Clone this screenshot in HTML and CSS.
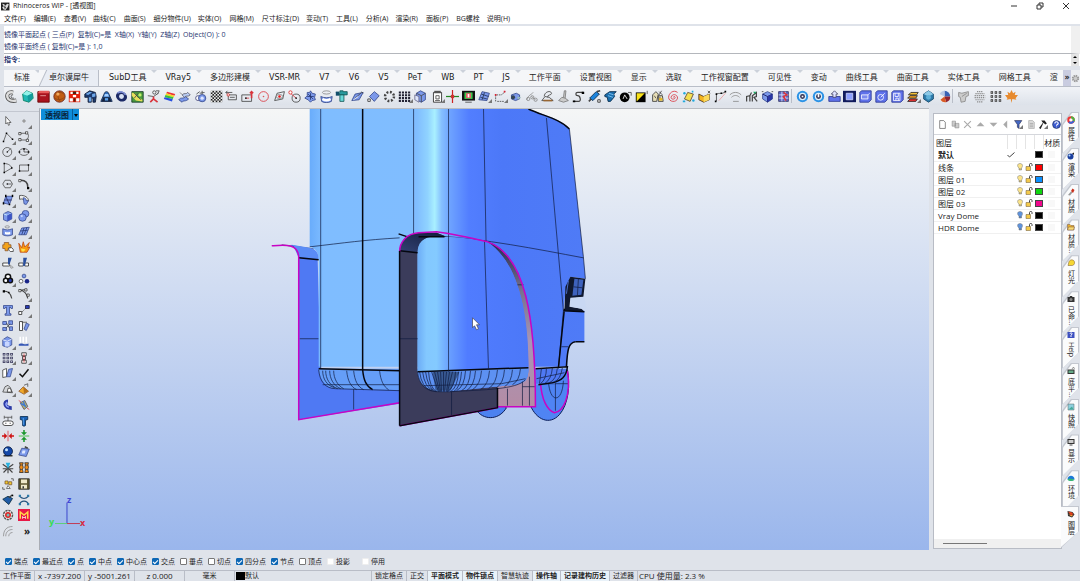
FILE: index.html
```
<!DOCTYPE html>
<html lang="zh-CN">
  <head>
    <meta charset="UTF-8" />
    <meta name="viewport" content="width=device-width, initial-scale=1" />
    <title>Rhinoceros WIP - [透视图]</title>
    <link rel="stylesheet" href="styles.css">
  </head>
  <body>
    <header class="titlebar">
      <svg class="app-icon" viewBox="0 0 16 16"><path d="M0 1h15v14H0z" fill="#222"/><path d="M2 3l4 1 1 3 4-4 3 1-2 5-4 5-4-1-2-4 3-1z" fill="#ddd"/><path d="M5 7l4 2-2 4z" fill="#333"/></svg>
      <h1>Rhinoceros WIP - [透视图]</h1>
      <div class="window-buttons">
        <button aria-label="最小化"><svg viewBox="0 0 10 10"><path d="M2 5h6"/></svg></button>
        <button aria-label="还原"><svg viewBox="0 0 10 10"><path d="M2 4h4v4H2zM4 4V2h4v4H6"/></svg></button>
        <button aria-label="关闭"><svg viewBox="0 0 10 10"><path d="M2 2l6 6M8 2L2 8"/></svg></button>
      </div>
    </header>

    <nav class="menubar">
      <button>文件(F)</button>
      <button>编辑(E)</button>
      <button>查看(V)</button>
      <button>曲线(C)</button>
      <button>曲面(S)</button>
      <button>细分物件(U)</button>
      <button>实体(O)</button>
      <button>网格(M)</button>
      <button>尺寸标注(D)</button>
      <button>变动(T)</button>
      <button>工具(L)</button>
      <button>分析(A)</button>
      <button>渲染(R)</button>
      <button>面板(P)</button>
      <button>BG螺栓</button>
      <button>说明(H)</button>
    </nav>

    <section class="command">
      <div class="history">
        <p>镜像平面起点 ( 三点(P)&nbsp; 复制(C)=是&nbsp; X轴(X)&nbsp; Y轴(Y)&nbsp; Z轴(Z)&nbsp; Object(O) ): 0</p>
        <p>镜像平面终点 ( 复制(C)=是 ): 1,0</p>
      </div>
      <div class="prompt">
        <label for="cmd">指令:</label>
        <input id="cmd" type="text">
        <div class="spin">
          <button aria-label="上"><svg viewBox="0 0 8 6"><path d="M2 4l2-2 2 2z"/></svg></button>
          <button aria-label="下"><svg viewBox="0 0 8 6"><path d="M2 2l2 2 2-2z"/></svg></button>
        </div>
      </div>
    </section>

    <nav class="tabs">
      <div class="tab-list">
        <button>标准</button>
        <button class="active">卓尔谟犀牛</button>
        <button>SubD工具</button>
        <button>VRay5</button>
        <button>多边形建模</button>
        <button>VSR-MR</button>
        <button>V7</button>
        <button>V6</button>
        <button>V5</button>
        <button>PeT</button>
        <button>WB</button>
        <button>PT</button>
        <button>JS</button>
        <button>工作平面</button>
        <button>设置视图</button>
        <button>显示</button>
        <button>选取</button>
        <button>工作视窗配置</button>
        <button>可见性</button>
        <button>变动</button>
        <button>曲线工具</button>
        <button>曲面工具</button>
        <button>实体工具</button>
        <button>网格工具</button>
        <button>渲</button>
      </div>
      <div class="tabs-more">
        <button aria-label="更多">»</button>
        <button aria-label="选项"><svg viewBox="0 0 16 16"><circle cx="8" cy="8" r="5" fill="none" stroke="#999" stroke-width="3" stroke-dasharray="2.5 1.4"/><circle cx="8" cy="8" r="4" fill="#ccc" stroke="#888"/></svg></button>
      </div>
    </nav>

    <div class="toolbar">
      <button aria-label="圆管"><svg viewBox="0 0 16 16"><path d="M10 3C4 2 2 5 3 9s6 5 11 4" fill="none" stroke="#555" stroke-width="5"/><path d="M10 3C4 2 2 5 3 9s6 5 11 4" fill="none" stroke="#ddd" stroke-width="3"/><path d="M10 6c-4 0-3 5 1 4" class="k"/></svg></button>
      <button aria-label="宝石"><svg viewBox="0 0 16 16"><path d="M2 5l5-4 7 3 1 6-5 5-7-2z" fill="#20b8b4" stroke="#075"/><path d="M2 5l6 2 6-3-7-3z" fill="#92f1e8"/><path d="M8 7l1 8 5-5V4z" fill="#129a9c"/></svg></button>
      <button aria-label="红色方块"><svg viewBox="0 0 16 16"><path d="M1 2h14v13H1z" fill="#a9121d" stroke="#600"/><path d="M1 4l2-3h12v3z" fill="#e65a5a"/><path d="M4 7h7" stroke="#eaa" stroke-width="1"/></svg></button>
      <button aria-label="材质球"><svg viewBox="0 0 16 16"><circle cx="8" cy="8" r="7" fill="#c05c14" stroke="#622"/><path d="M2 6c4-4 8-4 11-1M2 10c4 3 9 2 12-1M8 2c-3 4-2 9 1 12" fill="none" stroke="#8d4212"/><circle cx="6" cy="5" r="2" fill="#f3a95d"/></svg></button>
      <button aria-label="贴图"><svg viewBox="0 0 16 16"><path d="M1 1h14v14H1z" fill="#e3200b"/><path d="M3 2h3v3H3zM10 2h3v3h-3zM6 6h4v3H6zM2 10h4v4H2zM10 10h4v4h-4z" fill="#fff"/><path d="M6 2h4v3H6zM7 10h2v4H7z" fill="#421"/></svg></button>
      <button aria-label="装配"><svg viewBox="0 0 16 16"><path d="M1 5l6-4 7 2 1 5-1 7h-3v-5l-2 0v5H5V9H1z" class="n"/><path d="M2 5l5-3 3 1-5 3zM10 5l4-1v4l-4 1zM6 9h3v5H6z" fill="#6fa8ea"/></svg></button>
      <button aria-label="铃形"><svg viewBox="0 0 16 16"><path d="M1 14L5 5c1-4 5-4 6 0l4 9z" fill="#2f6dbd" stroke="#124"/><path d="M6 5h4l1 3H5z" fill="#a5d0ff"/><path d="M4 9h8l2 5H2z" fill="#15223d"/><path d="M6 10h4v3H6z" fill="#5ca1ec"/></svg></button>
      <button aria-label="圆环"><svg viewBox="0 0 16 16"><ellipse cx="8" cy="8" rx="7" ry="6" fill="#1c2a66" transform="rotate(30 8 8)"/><ellipse cx="8" cy="8" rx="3" ry="3" fill="#d9e2f5"/><path d="M3 4c3-3 8-2 10 2" fill="none" stroke="#8292d8" stroke-width="2"/></svg></button>
      <button aria-label="环境"><svg viewBox="0 0 16 16"><path d="M1 2h14v13H1z" fill="#4a9a3f" stroke="#132"/><path d="M1 3l5 2 2 4 6 3v2l-8-1-5-6z" fill="#e8e05a"/><path d="M4 4l8 8M9 4l-5 6" class="k"/><circle cx="11" cy="6" r="2" fill="#bff06a"/></svg></button>
      <button aria-label="骨架"><svg viewBox="0 0 16 16"><circle cx="9" cy="3" r="2" class="k"/><path d="M1 7l7 1 6-4M11 1h4l-2 4" class="k"/><path d="M8 8v3l-4 4M8 11l5 4" class="r" stroke-width="2"/></svg></button>
      <button aria-label="曲率"><svg viewBox="0 0 16 16"><path d="M5 2l10 3-1 2L4 4z" fill="#e33"/><path d="M4 4l10 3-1 2L3 6z" fill="#f5d620"/><path d="M3 6l10 3-1 2L2 9z" fill="#36c23c"/><path d="M2 9l10 2-1 3L1 11z" fill="#2a50e0"/></svg></button>
      <button aria-label="曲面片"><svg viewBox="0 0 16 16"><path d="M1 12c3-4 4 0 8-4l4 3c-4 4-6 1-8 4z" class="b"/><path d="M5 6c3-3 5 0 7-3l3 3c-3 3-5 0-7 3z" fill="#bcd0f8" stroke="#556"/><path d="M2 3l4 3" class="g"/></svg></button>
      <button aria-label="组合"><svg viewBox="0 0 16 16"><circle cx="5" cy="10" r="3" fill="#fff" stroke="#447"/><circle cx="10" cy="10" r="4.500" class="b"/><circle cx="10" cy="10" r="2" fill="#dfe7ff"/><path d="M3 5l4-3M10 1v4M7 4l6-1" class="k"/></svg></button>
      <button aria-label="棋盘格"><svg viewBox="0 0 16 16"><path d="M1 1h14v14H1z" fill="#222"/><path d="M1 2h14M1 6h14M1 10h14M1 14h14" stroke="#eee" stroke-width="2" stroke-dasharray="2 2"/><path d="M3 4h12M3 8h12M3 12h12" stroke="#eee" stroke-width="2" stroke-dasharray="2 2"/></svg></button>
      <button aria-label="拉伸矩形"><svg viewBox="0 0 16 16"><path d="M4 6h10v6H4zM1 3h8M1 3l2-2M1 3l2 2M6 9h6" class="k"/><circle cx="4" cy="6" r="1.500" fill="#fff" stroke="#c22"/></svg></button>
      <button aria-label="推移"><svg viewBox="0 0 16 16"><path d="M1 6h12v8H1z" class="k"/><path d="M13 10V2M11 4l2-2 2 2" class="r" stroke-width="2"/><path d="M6 10h4" class="r"/><circle cx="6" cy="10" r="1"/></svg></button>
      <button aria-label="圆"><svg viewBox="0 0 16 16"><circle cx="8" cy="8" r="6" class="r"/><circle cx="8" cy="8" r="1" fill="#d55"/></svg></button>
      <button aria-label="菱形"><svg viewBox="0 0 16 16"><path d="M2 13L5 4l9-2-2 9z" class="k"/><ellipse cx="8" cy="8" rx="4" ry="2.500" class="g"/><circle cx="8" cy="8" r="1.500" fill="#e11"/></svg></button>
      <button aria-label="切点圆"><svg viewBox="0 0 16 16"><circle cx="10" cy="10" r="5" class="k"/><path d="M2 3l8 7" class="r"/><circle cx="3" cy="3" r="2" fill="#fff" stroke="#d22"/><circle cx="10" cy="10" r="1"/></svg></button>
      <button aria-label="变形"><svg viewBox="0 0 16 16"><path d="M8 1l2 3 4 1-1 4 1 3-4 1-2 2-3-3-4-2 3-3 0-4 3 0z" class="b"/><path d="M8 4v8M4 8h8M5 5l6 6" stroke="#24356f"/></svg></button>
      <button aria-label="放样"><svg viewBox="0 0 16 16"><ellipse cx="8" cy="3" rx="5" ry="2" class="g"/><path d="M1 8c4 2 10 2 14 0l-1 6c-4 2-9 2-12 0z" class="b"/><path d="M3 11c3 2 7 2 10 0" stroke="#fff" stroke-width="3" fill="none"/></svg></button>
      <button aria-label="夹具"><svg viewBox="0 0 16 16"><path d="M1 3h4v3h10V2h-5V1H6v2" fill="#29999d" stroke="#155"/><path d="M6 6h5v8H6z" fill="#6adada" stroke="#155"/><path d="M1 2h4v5H1z" fill="#134e6b"/></svg></button>
      <button aria-label="编辑面"><svg viewBox="0 0 16 16"><path d="M1 13L5 5l10-2-5 9z" class="b"/><path d="M4 11l9-8M13 2l2 2" class="k"/><path d="M3 12l6-4" stroke="#fff"/></svg></button>
      <button aria-label="平面"><svg viewBox="0 0 16 16"><path d="M3 8l6-6 6 5-6 7z" class="b"/><path d="M1 11h3v3H1z" fill="#fff" stroke="#333"/></svg></button>
      <button aria-label="环形阵列"><svg viewBox="0 0 16 16"><circle cx="8" cy="8" r="5.500" fill="none" stroke="#444" stroke-width="3" stroke-dasharray="2.300 2"/></svg></button>
      <button class="fly" aria-label="矩形阵列"><svg viewBox="0 0 16 16"><path d="M1 3h14M1 6.500h14M1 10h14M1 13.500h14" stroke="#223" stroke-width="2.500" stroke-dasharray="2.600 1.200"/></svg></button>
      <button aria-label="方块"><svg viewBox="0 0 16 16"><path d="M3 4l5-3 6 3v8l-5 3-6-3z" class="b"/><path d="M3 4l6 3 5-3M9 7v8" class="k"/><path d="M1 6v6l5 3V8z" fill="#dce4fa" stroke="#668"/></svg></button>
      <i class="sep thin"></i>
      <button class="fly" aria-label="剪贴板"><svg viewBox="0 0 16 16"><path d="M3 3h10v12H3z" fill="#fff" stroke="#222"/><path d="M4 1h8v3H4z" fill="#555"/><path d="M6 7h4v4H6zM5 13h6" class="k"/></svg></button>
      <button aria-label="操作轴"><svg viewBox="0 0 16 16"><path d="M8 0v16" stroke="#c22" stroke-width="1.500"/><path d="M0 8h16" stroke="#282" stroke-width="1.500"/><path d="M6 6h4v4H6z" fill="#c33"/></svg></button>
      <button aria-label="渲染窗口"><svg viewBox="0 0 16 16"><path d="M0 1h16v12H0z" fill="#111"/><path d="M3 3h10v8H3z" fill="#3cc84f"/><path d="M5 4h6v6H5z" fill="#ef5a6a"/><path d="M7 5h2v4H7z" fill="#fff"/><path d="M4 15h8" class="k"/></svg></button>
      <button class="fly" aria-label="网格面"><svg viewBox="0 0 16 16"><path d="M1 12L5 2l9 2-3 9z" class="b"/><path d="M4 5l9 3M3 9l8 2M8 3l-3 9" stroke="#235"/></svg></button>
      <button class="fly" aria-label="控制点"><svg viewBox="0 0 16 16"><path d="M2 14V6h7M9 6l5-4M4 14h9" class="k" stroke-dasharray="2 1"/><path d="M12 1h2v2h-2zM1 5h2v2H1z" fill="#d23"/></svg></button>
      <button aria-label="圆柱"><svg viewBox="0 0 16 16"><path d="M3 6l6-2 4 2v5l-5 2-5-2z" class="b"/><circle cx="5" cy="9" r="2.500" fill="#345"/><path d="M10 8l5 1-4 3z" fill="#9bb"/></svg></button>
      <button aria-label="节点"><svg viewBox="0 0 16 16"><path d="M2 12c3-7 6-6 8-9M8 8l5 4" class="g"/><circle cx="4" cy="11" r="2" class="g"/><circle cx="9" cy="9" r="2" class="g"/><circle cx="13" cy="12" r="2" class="g"/></svg></button>
      <button aria-label="地形"><svg viewBox="0 0 16 16"><path d="M1 13l4-5 5 1 5 4zM4 8c0-6 8-8 9-4 0 3-5 1-5 5" class="k"/><path d="M3 13h11" stroke="#963" stroke-width="2"/></svg></button>
      <button aria-label="笔刷"><svg viewBox="0 0 16 16"><path d="M2 13l4-4 4 1 4 3-6 2zM8 9l1-8h2l-1 9" fill="#ccc" stroke="#777"/></svg></button>
      <button aria-label="连接线"><svg viewBox="0 0 16 16"><path d="M14 3H7c-3 0-3 4 0 4s5 7 1 7H2" class="k" stroke-width="1.500"/><path d="M12 2h3v3h-3zM1 13h3v2H1z"/></svg></button>
      <button aria-label="注入"><svg viewBox="0 0 16 16"><path d="M2 10l8-8 4 3-8 8z" fill="#1c83dc" stroke="#024"/><path d="M1 14l3-3M11 2l4-1" class="k" stroke-width="2"/><path d="M12 12h3v3h-3z" fill="#fff" stroke="#222"/></svg></button>
      <button aria-label="抓取"><svg viewBox="0 0 16 16"><path d="M1 6l6-4h8l-3 3 1 3-5 6H5L4 9 1 8z" fill="#1b6fae" stroke="#024"/><path d="M6 4l6 2M5 7l6 2" stroke="#8cf"/></svg></button>
      <button aria-label="黑球"><svg viewBox="0 0 16 16"><circle cx="7" cy="9" r="6"/><path d="M5 11l2-5 3 5" stroke="#fff" fill="none"/><path d="M11 3h4v4" class="k"/></svg></button>
      <button aria-label="明暗"><svg viewBox="0 0 16 16"><path d="M1 3h12v12H1z"/><path d="M2 4h10L2 14z" fill="#f8e11b"/><path d="M15 1v4" class="k"/></svg></button>
      <button aria-label="油桶"><svg viewBox="0 0 16 16"><path d="M2 6l4-4 3 3-2 9H2zM9 7h5l1 7H9z" fill="#e8dfb8" stroke="#333"/><path d="M4 7l2 3M11 8v4M10 2l4 4M13 1l-3 5" class="k"/><path d="M10 10h4v3h-4z" fill="#e7b820"/></svg></button>
      <button aria-label="螺旋"><svg viewBox="0 0 16 16"><path d="M13 3C8-1 2 4 2 9c0 6 10 7 11 1 0-5-7-6-8-1 0 3 5 3 5 0-1-2-2-1-2 0" class="r"/></svg></button>
      <button aria-label="黄面"><svg viewBox="0 0 16 16"><path d="M3 11l4-8 7 2-4 9z" fill="#f5df50" stroke="#543"/><circle cx="3" cy="4" r="1.500" fill="#2ad"/><circle cx="14" cy="13" r="1.500" fill="#2ad"/><path d="M1 14h3M13 1v2" stroke="#2ad" stroke-width="2"/></svg></button>
      <button aria-label="黄盒"><svg viewBox="0 0 16 16"><path d="M1 5l6 3 7-3v7l-7 3-6-3z" fill="#f3b320" stroke="#432"/><path d="M7 8l7-3v7l-7 3z" fill="#fbd95a"/><path d="M12 1l3 3M15 1l-3 3" class="k"/></svg></button>
      <button aria-label="样条"><svg viewBox="0 0 16 16"><path d="M3 14V5c4-2 6 1 11-3" class="k"/><path d="M6 13l8-9" stroke="#e99"/><path d="M2 4h2v2H2zM8 3h2v2H8zM13 1h2v2h-2zM1 13h2v2H1z"/></svg></button>
      <button aria-label="波形"><svg viewBox="0 0 16 16"><path d="M1 6c4-4 10-4 14 0M3 9c3-3 7-3 10 0M5 14h7" class="g"/></svg></button>
      <button aria-label="舞者"><svg viewBox="0 0 16 16"><path d="M2 14V8l4-1v7M6 7l2-4" class="k" stroke-width="1.500"/><path d="M9 14V7l5-4v5l-3 1 4 5" class="k" stroke-width="1.500"/><path d="M10 2l4 0-2 3z" fill="#2a6"/></svg></button>
      <button aria-label="立方体"><svg viewBox="0 0 16 16"><path d="M2 5l6-3 6 3v6l-6 4-6-4z" class="b"/><path d="M2 5l6 3 6-3M8 8v7" stroke="#115" fill="none"/><path d="M8 8l6-3v6l-6 4z" fill="#2b37a5"/><path d="M13 2h2M1 2h2" class="k"/></svg></button>
      <button aria-label="拆分格"><svg viewBox="0 0 16 16"><path d="M2 2h12v12H2z" fill="#5c6cc8" stroke="#336"/><path d="M2 6h12M2 10h12M6 2v12M10 2v12" stroke="#e6e9fb"/><path d="M8 3l4 3-4 2 3 5" class="r" stroke-width="2"/></svg></button>
      <i class="sep"></i>
      <button aria-label="设置一"><svg viewBox="0 0 16 16"><circle cx="8" cy="8" r="7" fill="#2c93e6"/><circle cx="8" cy="8" r="4.500" fill="#dff0fc"/><circle cx="8" cy="8" r="3" fill="#335"/><path d="M7 7h2v2H7z" fill="#fff"/></svg></button>
      <button aria-label="设置二"><svg viewBox="0 0 16 16"><circle cx="8" cy="8" r="7" fill="#2c93e6"/><circle cx="8" cy="8" r="4.500" fill="#dff0fc"/><circle cx="8" cy="8" r="3" fill="#335"/><path d="M7 5h2v4H7z" fill="#fff"/></svg></button>
      <button aria-label="导出"><svg viewBox="0 0 16 16"><path d="M1 8h14v6H1z" class="v"/><path d="M8 1l4 4h-2v4H6V5H4z" fill="#dfe3ff" stroke="#446"/></svg></button>
      <button aria-label="外框"><svg viewBox="0 0 16 16"><path d="M0 1h16v14H0z" fill="#101a5c"/><path d="M4 4h8v8H4z" fill="#8ea0ff" stroke="#cdd5ff"/></svg></button>
      <button aria-label="矩形块"><svg viewBox="0 0 16 16"><path d="M1 3l2-2h12v11l-3 3H1z" class="v"/><path d="M3 6h8v5H3z" fill="#7c8bf0" stroke="#fff"/><path d="M13 4l-2 2" stroke="#fff"/></svg></button>
      <button aria-label="圆形块"><svg viewBox="0 0 16 16"><path d="M1 3l2-2h12v11l-3 3H1z" class="v"/><circle cx="7" cy="9" r="3.500" fill="none" stroke="#fff"/><path d="M7 9l5-5" stroke="#fff"/></svg></button>
      <button aria-label="保存块"><svg viewBox="0 0 16 16"><path d="M1 3l2-2h12v11l-3 3H1z" class="v"/><path d="M3 4h8v9H3zM5 4v4h4V4M6 13v-3h3v3" fill="none" stroke="#fff"/></svg></button>
      <button class="fly" aria-label="图层堆叠"><svg viewBox="0 0 16 16"><path d="M2 14l3-3h9l-2 3z" fill="#e33" stroke="#222"/><path d="M2 10l3-3h9l-2 3z" fill="#f2a222" stroke="#222"/><path d="M3 6l3-3h9l-2 3z" fill="#f5c23a" stroke="#222"/></svg></button>
      <button aria-label="六角"><svg viewBox="0 0 16 16"><path d="M8 1l6 4v6l-6 4-6-4V5z" fill="#2f7dad" stroke="#146"/><path d="M2 5l6 3 6-3-6-4z" fill="#8cc8e6"/><circle cx="8" cy="9" r="3" fill="#5fb0d8"/></svg></button>
      <button aria-label="色轮"><svg viewBox="0 0 16 16"><circle cx="8" cy="8" r="7" fill="#eee"/><path d="M8 8V1a7 7 0 0 1 7 7z" fill="#3a63b5"/><path d="M8 8h7a7 7 0 0 1-5 7z" fill="#912432"/><path d="M8 8l2 7a7 7 0 0 1-7-3z" fill="#d95a24"/><path d="M8 8L2 5a7 7 0 0 1 6-4z" fill="#b8c9e6"/></svg></button>
      <i class="sep"></i>
      <button aria-label="卷曲"><svg viewBox="0 0 16 16"><path d="M2 3l4 1 8-2v5l-3 1-1 6-5 1-1-6-2-1z" fill="#ccc" stroke="#888"/><path d="M6 8l6-4" class="g"/></svg></button>
      <button aria-label="点云球"><svg viewBox="0 0 16 16"><path d="M5 2h7M3 4.500h11M2 7h13M2 9.500h13M3 12h11M5 14.500h7" class="g" stroke-width="1.500" stroke-dasharray="1.500 1"/></svg></button>
      <button aria-label="点阵"><svg viewBox="0 0 16 16"><path d="M2 3h13M2 8h13M2 13h13" stroke="#333" stroke-width="3" stroke-dasharray="3 2"/><path d="M2 3h13M2 8h13M2 13h13" stroke="#fff" stroke-width="1" stroke-dasharray="1 4" stroke-dashoffset="-1"/></svg></button>
      <button aria-label="枫叶"><svg viewBox="0 0 16 16"><path d="M8 0l2 4 3-2-1 4h4l-3 4 1 2-5-1-1 5-1-5-5 1 1-2-3-4h4L3 2l3 2z" fill="#e78a2e"/></svg></button>
    </div>

    <main>
      <div class="palette">
        <button aria-label="选取"><svg viewBox="0 0 16 16"><path d="M5 2v10l2-2 2 4 1-1-1-3h3z" fill="#fff" stroke="#444"/></svg></button>
        <button class="fly" aria-label="点"><svg viewBox="0 0 16 16"><circle cx="8" cy="8" r="1.500" fill="#fff" stroke="#555"/></svg></button>
        <button class="fly" aria-label="多重直线"><svg viewBox="0 0 16 16"><path d="M2 14L6 3l8 8" class="k"/><path d="M1 13h2v2H1zM5 2h2v2H5zM13 10h2v2h-2z"/></svg></button>
        <button class="fly" aria-label="控制点曲线"><svg viewBox="0 0 16 16"><path d="M3 3h8c5 0 3 9-1 9H3" class="k"/><path d="M1 2h3v3H1zM10 1h3v3h-3zM1 10h3v3H1zM11 11h3v3h-3z" fill="#fff" stroke="#333"/></svg></button>
        <button class="fly" aria-label="圆"><svg viewBox="0 0 16 16"><circle cx="7" cy="8" r="6" class="k"/><path d="M7 8l5-5" class="k"/><circle cx="7" cy="8" r="1"/></svg></button>
        <button class="fly" aria-label="椭圆"><svg viewBox="0 0 16 16"><ellipse cx="8" cy="8" rx="6.500" ry="4.500" class="k"/><path d="M8 4v4h6" class="k"/><path d="M7 3h2v2H7zM1 7h2v2H1zM13 7h2v2h-2z"/></svg></button>
        <button class="fly" aria-label="圆弧"><svg viewBox="0 0 16 16"><path d="M3 2c6 0 10 4 10 6L3 14z" class="k"/><path d="M2 1h2v2H2zM2 13h2v2H2zM12 7h2v2h-2z"/></svg></button>
        <button class="fly" aria-label="矩形"><svg viewBox="0 0 16 16"><path d="M2 4h12v8H2z" class="k"/><path d="M1 11h2v2H1zM13 3h2v2h-2z"/></svg></button>
        <button class="fly" aria-label="多边形"><svg viewBox="0 0 16 16"><path d="M4 3h7l3 5-3 5H4L1 8z" class="k"/><path d="M7 8h6" class="k"/><circle cx="7" cy="8" r="1"/></svg></button>
        <button class="fly" aria-label="圆角"><svg viewBox="0 0 16 16"><path d="M4 3c7 0 9 5 9 9" class="k" stroke-width="2"/><path d="M1 2h3v3H1z" fill="#fff" stroke="#333"/><path d="M12 12h3v3h-3z"/></svg></button>
        <button class="fly" aria-label="点建面"><svg viewBox="0 0 16 16"><path d="M2 12L5 3h9l-4 11z" class="b"/><path d="M5 3l5 11M3 8h10" stroke="#225"/><path d="M1 11h2v3H1zM4 1h2v3H4zM13 1h2v3h-2zM9 13h2v2H9z"/></svg></button>
        <button class="fly" aria-label="旋转面"><svg viewBox="0 0 16 16"><path d="M2 2c7-1 12 3 12 7l-5 1c0-3-3-4-7-3z" fill="#eee" stroke="#333"/><path d="M7 5c3 0 4 2 4 4l3 0-3 5-3-1z" class="b"/></svg></button>
        <button class="fly" aria-label="立方体"><svg viewBox="0 0 16 16"><path d="M2 5l6-3 5 2v8l-6 3-5-2z" class="b"/><path d="M2 5l5 2 6-3" fill="none" stroke="#dff"/><path d="M7 7l6-3v8l-6 3z" fill="#3d55c4"/></svg></button>
        <button class="fly" aria-label="球体"><svg viewBox="0 0 16 16"><circle cx="10" cy="5" r="4.500" class="b"/><circle cx="6" cy="10" r="5" class="b"/><circle cx="5" cy="8" r="1.500" fill="#c5d6ff"/></svg></button>
        <button class="fly" aria-label="曲面编辑"><svg viewBox="0 0 16 16"><ellipse cx="7" cy="2.500" rx="3" ry="1.500" class="g"/><path d="M1 5c4 2 8 2 13 0v8c-4 2-9 2-13 0z" class="b"/><path d="M4 9c2 1 5 1 7 0v3c-2 1-5 1-7 0z" fill="#fff"/></svg></button>
        <button class="fly" aria-label="网格"><svg viewBox="0 0 16 16"><path d="M1 13L5 4l10-1-4 10z" class="b"/><path d="M3 8l10-1M8 4l-3 9M12 3l-4 10" stroke="#24356f"/></svg></button>
        <button aria-label="布尔运算"><svg viewBox="0 0 16 16"><path d="M3 2h6v3h3v5H8v3H4v-3H1V5h2z" fill="#f2a21a" stroke="#853"/><path d="M9 9h4l2 2v3h-4l-2-2z" fill="#fff" stroke="#333"/></svg></button>
        <button aria-label="炸开"><svg viewBox="0 0 16 16"><path d="M1 3l4 6 2-8 2 7 6-6-2 7 3-1-4 7H3z" fill="#f79a10" stroke="#b41"/><path d="M4 10l6 1-2 3H5z" fill="#fde04a"/></svg></button>
        <button aria-label="修剪"><svg viewBox="0 0 16 16"><path d="M1 8h9v4H1z" fill="#fff" stroke="#222"/><path d="M8 1h5l-3 9H8z" fill="#2a4f9e"/><path d="M10 10l5 4-3 1z" class="g"/></svg></button>
        <button aria-label="分割"><svg viewBox="0 0 16 16"><path d="M1 8h6v4H1zM9 8h5v4H9z" fill="#fff" stroke="#222"/><path d="M7 1h5l-3 11H7z" fill="#2a4f9e"/></svg></button>
        <button class="fly" aria-label="群组"><svg viewBox="0 0 16 16"><circle cx="8" cy="5" r="3.500" fill="#fff" stroke="#111" stroke-width="2"/><circle cx="5" cy="10" r="3" fill="#fff" stroke="#111" stroke-width="2"/><circle cx="11" cy="10" r="3" fill="#2a3eb8" stroke="#111" stroke-width="2"/></svg></button>
        <button aria-label="解散群组"><svg viewBox="0 0 16 16"><circle cx="8" cy="4" r="2.500" class="b"/><circle cx="4" cy="11" r="2.500" fill="#fff" stroke="#444"/><circle cx="12" cy="11" r="3" fill="#1a2488"/></svg></button>
        <button aria-label="曲线延伸"><svg viewBox="0 0 16 16"><path d="M2 4c6 0 10 4 11 10" class="k" stroke-width="1.500"/><path d="M1 3h3v3H1zM8 5h2v2H8z"/></svg></button>
        <button class="fly" aria-label="编辑点"><svg viewBox="0 0 16 16"><path d="M3 3c6 1 9 5 10 11M3 3l8-1" class="k" stroke-width="1.500"/><path d="M1 2h3v3H1zM9 1h3v3H9zM12 8h3v3h-3z" fill="#fff" stroke="#333"/></svg></button>
        <button aria-label="文字"><svg viewBox="0 0 16 16"><path d="M2 2h12v4h-2l-1-2h-1v9h2v2H4v-2h2V4H5L4 6H2z" class="b"/></svg></button>
        <button class="fly" aria-label="移动"><svg viewBox="0 0 16 16"><path d="M5 11l6-6" class="k" stroke-dasharray="2 1"/><path d="M1 10h4v4H1z" fill="#fff" stroke="#222"/><path d="M10 2h5v4h-5z" fill="#2a3eb8" stroke="#113"/></svg></button>
        <button aria-label="对齐"><svg viewBox="0 0 16 16"><path d="M1 2h5v4H1zM9 1h5v5H9zM1 10h5v4H1zM10 9h4v5h-4z" class="b"/><path d="M6 4l4 7M5 11l6-6" class="k"/></svg></button>
        <button aria-label="定位"><svg viewBox="0 0 16 16"><path d="M2 2v12h4V2z" fill="#fff" stroke="#222"/><path d="M8 12l3-8 4 2-4 8z" class="b"/><path d="M5 3h7" class="k"/></svg></button>
        <button class="fly" aria-label="实体工具"><svg viewBox="0 0 16 16"><path d="M1 5l6-4 6 3v8l-6 3-6-2z" class="b"/><path d="M4 8h6v6H4z" fill="#c8d6ff"/><path d="M1 5l6 2 6-3" fill="none" stroke="#fff"/></svg></button>
        <button class="fly" aria-label="投影"><svg viewBox="0 0 16 16"><path d="M3 1v8M7 1v8M11 1v8" stroke="#fff" stroke-width="2"/><path d="M1 11c4-3 8 2 13-1v3H1z" fill="#3557b5"/></svg></button>
        <button class="fly" aria-label="阵列"><svg viewBox="0 0 16 16"><path d="M1 3h14M1 8h14M1 13h14" stroke="#335" stroke-width="3.500" stroke-dasharray="3.500 1.500"/><path d="M2 3h14M2 8h14M2 13h14" stroke="#dde" stroke-width="1.500" stroke-dasharray="1.500 3.500"/></svg></button>
        <button class="fly" aria-label="变形控制"><svg viewBox="0 0 16 16"><path d="M5 1h6v4H5zM5 11h6v4H5zM6 6h4v4H6z" fill="#fff" stroke="#222"/><path d="M8 2v12" class="r" stroke-width="1"/></svg></button>
        <button class="fly" aria-label="偏移"><svg viewBox="0 0 16 16"><path d="M1 4l5-2v11l-5 1z" fill="#fff" stroke="#333"/><path d="M6 13l3-10 5-1-3 11z" class="b"/></svg></button>
        <button class="fly" aria-label="检查"><svg viewBox="0 0 16 16"><path d="M2 9l4 4L14 3" fill="none" stroke="#111" stroke-width="2"/></svg></button>
        <button class="fly" aria-label="壳体"><svg viewBox="0 0 16 16"><path d="M1 12l3-7 4-2 3 3 3 7z" fill="#d5d7da" stroke="#444"/><path d="M7 12l1-5h3l2 5z" fill="#fff" stroke="#333"/></svg></button>
        <button class="fly" aria-label="尖锥"><svg viewBox="0 0 16 16"><path d="M1 11l6-6 7 6-6 4z" fill="#f0a92a" stroke="#853"/><path d="M7 5l1 9 6-3z" fill="#b5701a"/><path d="M8 3l5-2v4" class="k"/></svg></button>
        <button aria-label="弯管"><svg viewBox="0 0 16 16"><path d="M8 3C2 3 3 12 13 12" fill="none" stroke="#2b3aa5" stroke-width="5"/><path d="M7 4c-3 2-2 6 2 7" fill="none" stroke="#97aaff" stroke-width="2"/></svg></button>
        <button aria-label="扭转"><svg viewBox="0 0 16 16"><path d="M3 5l6-3 4 8-5 4z" fill="#c4b765" stroke="#446"/><path d="M4 6l7 4M7 3l3 8" stroke="#447bd0" stroke-width="2"/><path d="M1 2l3 2M12 12l3 2" class="r"/></svg></button>
        <button aria-label="尺寸"><svg viewBox="0 0 16 16"><path d="M3 3h10M8 3v5M3 1v4M13 1v4" class="k"/><rect x="1" y="8" width="14" height="6" rx="3" fill="#fff" stroke="#222"/><path d="M4 11h2M10 11h2" class="k"/></svg></button>
        <button aria-label="螺栓"><svg viewBox="0 0 16 16"><path d="M3 2h10v4l-3 1v7l-2 1-2-1V7L3 6z" fill="#1b62b5" stroke="#024"/><path d="M7 4v9" stroke="#7bf"/></svg></button>
        <button aria-label="左右镜像"><svg viewBox="0 0 16 16"><path d="M8 1v14" class="r"/><path d="M0 7h3V4l4 4-4 4V9H0zM16 7h-3V4L9 8l4 4V9h3z" fill="#d01313"/></svg></button>
        <button aria-label="上下镜像"><svg viewBox="0 0 16 16"><path d="M1 8h14" stroke="#2b2" stroke-width="1"/><path d="M7 0h2v3h3L8 7 4 3h3zM7 16h2v-3h3L8 9l-4 4h3z" fill="#18962a"/></svg></button>
        <button aria-label="渲染球"><svg viewBox="0 0 16 16"><path d="M2 12h12v2H2z" fill="#333"/><circle cx="8" cy="7" r="6" fill="#1548a8" stroke="#013"/><circle cx="6" cy="5" r="2" fill="#c9e6ff"/></svg></button>
        <button aria-label="曲面展平"><svg viewBox="0 0 16 16"><path d="M1 12l4-9 10 1-4 10z" class="b"/><path d="M6 6h4l-1 4H5z" fill="#dfe8ff"/><path d="M9 1l4 2" class="k" stroke-width="2"/></svg></button>
        <button aria-label="放射"><svg viewBox="0 0 16 16"><path d="M8 8L1 3M8 8L2 14M8 8l6 6M8 8l7-5M1 9h5M10 9h5M8 8v7" class="k" stroke-width="1.500"/><path d="M5 1h6L8 9z" fill="#29b2e0"/></svg></button>
        <button aria-label="弹簧"><svg viewBox="0 0 16 16"><path d="M2 1h5l-1 3 1 3-1 3 1 4H2l1-4-1-3 1-3zM9 1h5l-1 3 1 3-1 3 1 4H9l1-4-1-3 1-3z" fill="#f28c18" stroke="#222"/><path d="M2 4h4M2 10h4M9 4h5M9 10h5" class="k"/></svg></button>
        <button aria-label="选取形状"><svg viewBox="0 0 16 16"><path d="M1 12v3h3M12 1h3v3" class="k"/><path d="M4 4h4v4H4zM9 5h4v4H9z" fill="#f6ca2c" stroke="#753"/><path d="M8 10l3 4H6z" fill="#fff" stroke="#555"/></svg></button>
        <button aria-label="保存"><svg viewBox="0 0 16 16"><path d="M1 1h14v14H1z" fill="#5e5731" stroke="#222"/><path d="M4 2h8v5H4zM4 9h8v5H4z" fill="#eee8c9"/><path d="M6 11h2v3H6z" fill="#333"/></svg></button>
        <button aria-label="蓝面"><svg viewBox="0 0 16 16"><path d="M1 7l7-4 6 3-5 8z" fill="#1e5ba6" stroke="#023"/><path d="M9 5l5-4" class="k" stroke-width="2"/><path d="M13 1h2v2h-2z"/></svg></button>
        <button aria-label="曲线网"><svg viewBox="0 0 16 16"><path d="M2 3c4 4 8 4 12 0M2 14c2-6 10-6 12 0" fill="none" stroke="#27537e" stroke-width="1.500"/><path d="M1 1h3v3H1zM12 1h3v3h-3zM1 12h3v3H1zM12 12h3v3h-3z" fill="#2f7aa8"/></svg></button>
        <button aria-label="齿轮"><svg viewBox="0 0 16 16"><circle cx="8" cy="8" r="6" fill="#fff" stroke="#555" stroke-width="2" stroke-dasharray="3 1"/><circle cx="8" cy="8" r="3" fill="#7bb" stroke="#d22" stroke-width="2"/></svg></button>
        <button aria-label="插件"><svg viewBox="0 0 16 16"><path d="M0 0h16v16H0z" fill="#e81846"/><path d="M3 13V4l5 4 5-4v9" fill="none" stroke="#ffd94a" stroke-width="2"/><path d="M6 13v-3l2 2 2-2v3" fill="none" stroke="#fff" stroke-width="1"/></svg></button>
        <button aria-label="同心曲线"><svg viewBox="0 0 16 16"><path d="M2 15C2 7 6 2 14 2M5 15c0-6 4-9 9-9M9 15c0-3 2-5 5-5" class="g"/></svg></button>
        <button class="more" aria-label="更多工具">»</button>
      </div>

      <section class="viewport">
        <svg class="scene" viewBox="39 108 890 442" preserveAspectRatio="xMidYMin slice">
          <defs>
            <linearGradient id="body" gradientUnits="userSpaceOnUse" x1="309" y1="0" x2="584" y2="0">
              <stop offset="0" stop-color="#69acfb"/>
              <stop offset=".05" stop-color="#7fbdff"/>
              <stop offset=".39" stop-color="#80bdff"/>
              <stop offset=".43" stop-color="#90d3ff"/>
              <stop offset=".455" stop-color="#a9f0ff"/>
              <stop offset=".48" stop-color="#85bfff"/>
              <stop offset=".51" stop-color="#6ea3ff"/>
              <stop offset=".58" stop-color="#527eff"/>
              <stop offset=".7" stop-color="#4c78f8"/>
              <stop offset="1" stop-color="#4f7bf6"/>
            </linearGradient>
            <linearGradient id="fin" gradientUnits="userSpaceOnUse" x1="417" y1="0" x2="528" y2="0">
              <stop offset="0" stop-color="#6cacf6"/>
              <stop offset=".08" stop-color="#83c8ff"/>
              <stop offset=".17" stop-color="#84caff"/>
              <stop offset=".3" stop-color="#679cff"/>
              <stop offset=".45" stop-color="#507cff"/>
              <stop offset="1" stop-color="#4c78f8"/>
            </linearGradient>
            <linearGradient id="strip" x1="0" y1="0" x2="0" y2="1">
              <stop offset="0" stop-color="#252b52"/>
              <stop offset=".3" stop-color="#77718e"/>
              <stop offset=".6" stop-color="#a795b5"/>
              <stop offset="1" stop-color="#b48ca5"/>
            </linearGradient>
            <linearGradient id="lip" x1="0" y1="1" x2="1" y2="0">
              <stop offset="0" stop-color="#334274"/>
              <stop offset="1" stop-color="#111c3b"/>
            </linearGradient>
          </defs>

          <!-- wheels -->
          <path d="M477 411c8 9 22 8 29-4l-9-6z" fill="#4c82f0" stroke="#0b1c55"/>
          <path d="M530 405c6 14 19 20 29 9 9-10 11-30 8-45l-36 4z" fill="#4f84f4" stroke="#0b1c55"/>
          <path d="M548 380c1 23 14 23 15 0M555 372v38M540 383h28" class="line"/>
          <path d="M540 381c1 18 7 29 14 31 9-1 17-17 13-42" class="edge"/>

          <!-- left mudguard plate -->
          <path d="M298 257l-4-9-4-4 20 4c5 1 7 5 7 11l3 110 79 10v24l-101 16z" fill="#4f79f3"/>
          <path d="M299 338h19M353 388v21" class="line"/>
          <path d="M281 244l32 4" class="line"/>

          <!-- body -->
          <path d="M309 108h219c18 7 34 11 41 20l14 128 2 22-15-2-5 15-2 19h21v31h-8c-7 0-9 7-9 25H318V262c0-10-2-14-9-16z" fill="url(#body)"/>
          <path d="M298 256c-1-6-3-9-7-12l18 3c6 1 9 5 9 12z" fill="#5a8cf6"/>
          <path d="M298 257l20 2" class="bold"/>
          <path d="M318 368h249c-1 10-8 14-15 15l-15 1-100 6-102-2c-10-1-16-8-17-20z" fill="#659ef8"/>
          <path d="M535 368h32c-1 10-8 14-15 15h-17z" fill="#4f79f3"/>
          <path d="M309 246c35-4 55-7 90-9M435 235c50 3 100 13 148 22" class="line"/>
          <path d="M320 108v260M413 108v125M448 108v263M483 108l5 260M546 117l17 193-5 58" class="line"/>
          <path d="M362 108v261c1 10 3 16 10 20" class="bold"/>
          <path d="M528 108c15 7 32 10 41 20" class="bold"/>
          <path d="M569 128l14 128 2 22" class="line"/>
          <path d="M318 368l82 2" class="bold"/>
          <path d="M318 369c1 12 7 19 17 19l64 2M322 370c0 8 4 15 12 17M325 370c0 8 4 15 12 18M329 370c0 8 4 15 11 18M333 370c0 8 4 15 10 18M346 370c1 10 4 16 10 19M353 370c1 10 4 16 10 19M379 370c1 10 4 16 9 19M322 384h78" class="line"/>
          <path d="M535 368l32-2c-1 10-6 14-15 16l-14 2" class="bold"/>
          <path d="M541 368l-2 15M546 367q0 12-6 16M552 367q-1 12-8 16M557 367q-1 12-8 15M562 367q-2 12-8 14M536 378l28-6" class="line"/>

          <!-- lamp and bracket -->
          <path d="M570 276l15 2-2 18-13 1-1 9 12 2 3 3-20-1 1-24z" fill="#10182f"/>
          <path d="M574 278l9 1-2 15-9 1z" fill="#3e62bd"/>
          <path d="M568 280l-2 13" stroke="#4a6cc4"/>
          <path d="M578 278l-1 17M573 286l9 1" class="line"/>
          <path d="M570 298l14-2 2 13-15-3z" fill="#c9d8f3"/>
          <path d="M563 310l21 1M575 341c-7 1-8 8-9 25M564 308l-6 59" class="bold"/>
          <path d="M584 341h-9" class="bold"/>
          <path d="M561 346h7" class="line"/>

          <!-- right mudguard -->
          <path d="M399 251c0-10 7-18 19-19h18l10 4-12 0c-11 0-17 6-17 16v118h10l70 16v21l-98 18z" fill="#3b3c5b"/>
          <path d="M399 251c0-10 7-18 19-19h18l10 4-12 0c-11 0-17 6-17 16z" fill="url(#lip)"/>
          <path d="M497 385l28-5c3-5 3-9 3-14-1-60-11-104-41-125 40 12 48 85 48 165h-38z" fill="url(#strip)"/>
          <path d="M417 252c0-10 6-16 17-16 19 0 35 1 52 5 32 20 42 70 42 126 0 12-3 15-13 17l-70 7c-20 0-27-8-28-20z" fill="url(#fin)"/>
          <path d="M417 371l111-4c0 12-3 15-13 17l-70 7c-20 0-27-8-28-20z" fill="#5d91f2"/>
          <path d="M432 371h27l-9 19h-15z" fill="#29436c" opacity=".7"/>
          <path d="M417 371l111-4" class="bold"/>
          <path d="M417 371c1 12 8 20 20 20h12c35-2 67-2 76-12M419 371q2 16 12 19M422 371q2 16 11 19M425 371q2 16 10 20M428 371q1 16 8 20M431 371l7 20M434 371l5 20M437 371l3 20M440 371l1 20M443 371v20M446 371l-2 20M449 371l-3 20M452 371l-5 20M455 371q-1 16-8 20M458 371q-1 16-8 20M461 371q-1 16-8 20M465 370q-1 16-9 20M470 370q-1 16-9 20M475 370q-1 15-9 20M481 370q-1 14-9 19M489 370q-1 14-9 19M497 369q-1 14-9 19M504 369q-1 14-8 18M512 369q-1 13-8 17M520 368q-1 12-8 16" class="line"/>
          <path d="M423 385l78-2 24-5" class="line"/>
          <path d="M448 236v135M484 240l4 128" class="line"/>
          <path d="M399 338h18M451 391v24M507 388v17M522 381v24M529 376v29M522 386h13M517 284h6" class="line"/>
          <path d="M399 250l18 2M398 233l9 3M418 236l26 0" class="bold"/>
          <path d="M399 251c0-10 7-18 19-19l18-1c16 2 34 6 51 10 38 13 48 76 48 165h-38M399 425l98-18" class="edge"/>
          <path d="M399 425l98-18v-20" class="bold"/>
          <path d="M271 245c12-1 27-3 27 12v162l101-17" class="edge"/>
          <path d="M399 250v175" class="bold"/>

          <path d="M472 317v10l2-2 2 4 2-1-2-4h3z" fill="#fff" stroke="#445" stroke-width=".7"/>

          <!-- world axes -->
          <path d="M66 523v-21" stroke="#3b47ce"/>
          <path d="M66 523h13" stroke="#c03a54"/>
          <path d="M66 523H54" stroke="#5bcf77"/>
          <text x="66" y="502" class="axis" fill="#3f47d6">z</text>
          <text x="79" y="525" class="axis" fill="#d6283e">x</text>
          <text x="48" y="524" class="axis" fill="#37dd4e">y</text>
        </svg>
        <div class="view-title">
          <button>透视图</button>
          <button aria-label="视图菜单"><svg viewBox="0 0 6 6"><path d="M1 2h4L3 5z"/></svg></button>
        </div>
      </section>

      <aside class="panel">
        <div class="panel-tools">
          <button aria-label="新图层"><svg viewBox="0 0 16 16"><path d="M3 1h7l3 3v11H3z" fill="#fff" stroke="#333"/></svg></button>
          <button aria-label="新子图层"><svg viewBox="0 0 16 16"><path d="M2 2h6v9H2zM7 6h7v8H7z" fill="#ccc" stroke="#888"/></svg></button>
          <button aria-label="删除"><svg viewBox="0 0 16 16"><path d="M2 2l12 12M14 2L2 14" stroke="#aaa" stroke-width="2"/></svg></button>
          <button aria-label="上移"><svg viewBox="0 0 16 16"><path d="M1 11l7-7 7 7z" fill="#aaa"/></svg></button>
          <button aria-label="下移"><svg viewBox="0 0 16 16"><path d="M1 5l7 7 7-7z" fill="#aaa"/></svg></button>
          <button aria-label="上一级"><svg viewBox="0 0 16 16"><path d="M11 1v14L4 8z" fill="#aaa"/></svg></button>
          <button class="fly" aria-label="过滤"><svg viewBox="0 0 16 16"><path d="M1 1h13L9 8v7l-3-2V8z" fill="#4468c4" stroke="#224"/></svg></button>
          <button aria-label="列"><svg viewBox="0 0 16 16"><path d="M3 1h7l3 3v11H3z" fill="#ddd" stroke="#999"/><path d="M5 6h6M5 9h6M5 12h6" class="g"/></svg></button>
          <button class="fly" aria-label="工具"><svg viewBox="0 0 16 16"><path d="M4 1h6l4 5-3 2-3-3-5 11-3-2 7-9z" fill="#222"/></svg></button>
          <button aria-label="帮助"><svg viewBox="0 0 16 16"><circle cx="8" cy="8" r="7" fill="#3c5bd0" stroke="#124"/><path d="M5 6c0-4 6-4 6 0 0 2-3 2-3 4M8 12v1" fill="none" stroke="#fff" stroke-width="2"/></svg></button>
        </div>
        <table class="layers">
          <thead>
            <tr><th>图层</th><th></th><th></th><th></th><th></th><th>材质</th></tr>
          </thead>
          <tbody>
            <tr class="current"><td>默认</td><td><svg viewBox="0 0 16 16"><path d="M1 8l4 4L15 3" class="k" stroke-width="2"/></svg></td><td></td><td></td><td><i class="swatch black"></i></td><td><i class="mat"></i></td></tr>
            <tr><td>线条</td><td></td><td><svg viewBox="0 0 16 16"><use href="#bulb" class="lit"/></svg></td><td><svg viewBox="0 0 16 16"><use href="#lock"/></svg></td><td><i class="swatch red"></i></td><td><i class="mat"></i></td></tr>
            <tr><td>图层 01</td><td></td><td><svg viewBox="0 0 16 16"><use href="#bulb" class="lit"/></svg></td><td><svg viewBox="0 0 16 16"><use href="#lock"/></svg></td><td><i class="swatch blue"></i></td><td><i class="mat"></i></td></tr>
            <tr><td>图层 02</td><td></td><td><svg viewBox="0 0 16 16"><use href="#bulb" class="lit"/></svg></td><td><svg viewBox="0 0 16 16"><use href="#lock"/></svg></td><td><i class="swatch green"></i></td><td><i class="mat"></i></td></tr>
            <tr><td>图层 03</td><td></td><td><svg viewBox="0 0 16 16"><use href="#bulb" class="lit"/></svg></td><td><svg viewBox="0 0 16 16"><use href="#lock"/></svg></td><td><i class="swatch pink"></i></td><td><i class="mat"></i></td></tr>
            <tr><td>Vray Dome</td><td></td><td><svg viewBox="0 0 16 16"><use href="#bulb" class="off"/></svg></td><td><svg viewBox="0 0 16 16"><use href="#lock"/></svg></td><td><i class="swatch black"></i></td><td><i class="mat"></i></td></tr>
            <tr><td>HDR Dome</td><td></td><td><svg viewBox="0 0 16 16"><use href="#bulb" class="off"/></svg></td><td><svg viewBox="0 0 16 16"><use href="#lock"/></svg></td><td><i class="swatch black"></i></td><td><i class="mat"></i></td></tr>
          </tbody>
        </table>
        <div class="scrollbar"><i></i></div>
      </aside>

      <nav class="side-tabs">
        <button><svg viewBox="0 0 16 16"><circle cx="8" cy="8" r="5.500" fill="none" stroke="#e33" stroke-width="4"/><path d="M8 2.500a5.500 5.500 0 0 1 5 8" fill="none" stroke="#4b4" stroke-width="4"/><path d="M13 10a5.500 5.500 0 0 1-9 2" fill="none" stroke="#36d" stroke-width="4"/></svg><span>属性</span></button>
        <button><svg viewBox="0 0 16 16"><circle cx="7" cy="9" r="6" fill="#1a3f9e"/><circle cx="5" cy="7" r="2" fill="#bdf"/><path d="M10 3l4-2v5z" fill="#222"/></svg><span>渲染</span></button>
        <button><svg viewBox="0 0 16 16"><path d="M2 14l6-7 3 2-5 6z" fill="#999"/><path d="M8 6l3-5 4 3-3 6z" fill="#c8321e"/></svg><span>材质</span></button>
        <button><svg viewBox="0 0 16 16"><path d="M1 3h5l2 2h6v9H1z" fill="#e8b02c" stroke="#754"/><path d="M3 8h12l-2 6H1z" fill="#fbdc74" stroke="#754"/></svg><span>材质...</span></button>
        <button><svg viewBox="0 0 16 16"><path d="M2 13l2-8c3-5 10-4 11 1s-3 8-7 7z" fill="#f6d734" stroke="#753"/></svg><span>灯光</span></button>
        <button><svg viewBox="0 0 16 16"><path d="M1 4h4l1-2h4l1 2h4v10H1z" fill="#333"/><circle cx="8" cy="9" r="3" fill="#888"/></svg><span>已命...</span></button>
        <button><svg viewBox="0 0 16 16"><path d="M1 2h14v12H1z" fill="#3d50c0"/><path d="M6 6c0-3 5-3 4 0l-2 3v3" stroke="#fff" fill="none" stroke-width="2"/></svg><span>Help</span></button>
        <button><svg viewBox="0 0 16 16"><path d="M1 5h14v9H1z" fill="#333"/><path d="M3 7h10v5H3z" fill="#6a8"/><path d="M10 4l3-4 2 4" class="k"/></svg><span>底平...</span></button>
        <button><svg viewBox="0 0 16 16"><path d="M2 2h12v12H2z" fill="#8fd0de" stroke="#566"/><path d="M3 13l7-6 3 6z" fill="#4a9"/></svg><span>快照</span></button>
        <button><svg viewBox="0 0 16 16"><path d="M1 2h14v10H1z" fill="#333"/><path d="M3 4h10v6H3z" fill="#ccc"/><path d="M5 14h6" class="k" stroke-width="2"/></svg><span>显示</span></button>
        <button><svg viewBox="0 0 16 16"><path d="M1 11c0-10 14-10 14 0z" fill="#1c79d8"/><path d="M1 11c5-4 9 0 14 0-2 4-12 4-14 0z" fill="#35b575"/></svg><span>环境</span></button>
        <button class="active"><svg viewBox="0 0 16 16"><path d="M1 2l10 2 4 5-5 6-8-3z" fill="#333"/><path d="M2 3l8 2 3 4-6 1z" fill="#e8421c"/><path d="M2 8l5 2h5l-3 3z" fill="#f59b3a"/></svg><span>图层</span></button>
      </nav>
    </main>

    <div class="osnap">
      <label><input type="checkbox" checked>端点</label>
      <label><input type="checkbox" checked>最近点</label>
      <label><input type="checkbox" checked>点</label>
      <label><input type="checkbox" checked>中点</label>
      <label><input type="checkbox" checked>中心点</label>
      <label><input type="checkbox" checked>交点</label>
      <label><input type="checkbox">垂点</label>
      <label><input type="checkbox">切点</label>
      <label><input type="checkbox" checked>四分点</label>
      <label><input type="checkbox" checked>节点</label>
      <label><input type="checkbox">顶点</label>
      <label class="soft"><input type="checkbox">投影</label>
      <label class="soft last"><input type="checkbox">停用</label>
    </div>

    <footer class="status">
      <button>工作平面</button>
      <output>x -7397.200</output>
      <output>y -5001.261</output>
      <output>z 0.000</output>
      <button class="unit">毫米</button>
      <button class="layer"><i></i>默认</button>
      <button>锁定格点</button>
      <button>正交</button>
      <button class="on">平面模式</button>
      <button class="on">物件锁点</button>
      <button>智慧轨迹</button>
      <button class="on">操作轴</button>
      <button class="on">记录建构历史</button>
      <button>过滤器</button>
      <span class="cpu">CPU 使用量: 2.3 %</span>
    </footer>

    <svg class="sprite" aria-hidden="true">
      <symbol id="bulb" viewBox="0 0 16 16"><path d="M8 1c6 0 6 6 3 9v4H6v-4C2 7 2 1 8 1z" stroke="#777"/><path d="M6 12h5" stroke="#555"/></symbol>
      <symbol id="lock" viewBox="0 0 16 16"><path d="M2 7h9v8H2z" fill="#f3c94b" stroke="#653"/><path d="M9 7V3c0-3 5-3 5 0v3" fill="none" stroke="#444" stroke-width="2"/></symbol>
    </svg>
  </body>
</html>
```

FILE: styles.css
```
* {
  box-sizing: border-box;
}

body {
  margin: 0;
  height: 100vh;
  display: flex;
  flex-direction: column;
  overflow: hidden;
  background: #dfe3ea;
  color: #222;
  font: 7px/10px "Open Sans", "Noto Sans CJK SC", sans-serif;
}

button {
  position: relative;
  padding: 0;
  border: 0;
  background: none;
  color: inherit;
  font: inherit;
  white-space: nowrap;
}

h1,
p {
  margin: 0;
  font: inherit;
}

svg {
  display: block;
}

/* shared icon strokes */
.k {
  fill: none;
  stroke: #444;
}
.g {
  fill: none;
  stroke: #888;
}
.r {
  fill: none;
  stroke: #d9343c;
}
.b {
  fill: #7b98ea;
  stroke: #34478a;
}
.n {
  fill: #1d3a6e;
  stroke: #0b1733;
}
.v {
  fill: #5f72ea;
  stroke: #2a3690;
}

.sprite {
  position: absolute;
  width: 0;
  height: 0;
}

/* title + menu */
.titlebar {
  display: flex;
  align-items: center;
  flex: none;
  height: 12px;
  background: #fff;
}
.app-icon {
  width: 9px;
  height: 9px;
  margin: 0 3px 0 1px;
}
.window-buttons {
  display: flex;
  gap: 16px;
  margin-left: auto;
  padding-right: 9px;
}
.window-buttons svg {
  width: 10px;
  height: 10px;
  fill: none;
  stroke: #333;
}

.menubar {
  display: flex;
  flex: none;
  height: 12px;
  padding: 1px 4px 0;
  background: #fff;
}
.menubar button {
  margin-right: 8px;
}
.menubar button:nth-child(3n) {
  margin-right: 7px;
}

/* command area */
.command {
  flex: none;
  margin-top: 2px;
  margin-left: 4px;
  background: #fff;
  color: #27356f;
}
.history {
  height: 28px;
  padding-top: 3px;
  border-right: 9px solid #f0f0f0;
  border-bottom: 1px solid #b4b7bc;
  line-height: 12px;
}
.prompt {
  display: flex;
  align-items: center;
  height: 12px;
  font-weight: bold;
}
.prompt input {
  flex: 1;
  min-width: 0;
  border: 0;
  padding: 0 2px;
  outline: none;
  font: inherit;
}
.spin {
  width: 8px;
  margin-right: 1px;
  background: #e4e4e4;
}
.spin button {
  display: block;
  width: 8px;
}

/* toolbar tabs */
.tabs {
  display: flex;
  flex: none;
  height: 17px;
  margin: 4px 0 0 4px;
  background: #f5f6f8;
  border-bottom: 1px solid #b9bec8;
  font: 8px/16px "DejaVu Sans", "Noto Sans CJK SC", sans-serif;
}
.tab-list {
  display: flex;
  flex: 1;
  min-width: 0;
  overflow: hidden;
}
.tab-list button {
  flex: none;
  padding: 0 9px 0 10px;
}
.tab-list button::after {
  content: "";
  position: absolute;
  top: 0;
  right: -2px;
  border: 3px solid transparent;
  border-top-color: #ccd1da;
}
.tab-list .active {
  background: linear-gradient(115deg, #f5f6f8 6px, #b9bec8 7px, #e9edf4 8px);
  border-right: 1px solid #b9bec8;
}
.tab-list .active::after {
  display: none;
}
.tabs-more {
  display: flex;
  flex: none;
  background: #eceef2;
}
.tabs-more button:first-child {
  width: 8px;
  background: #c9cce0;
  font-weight: bold;
}
.tabs-more svg {
  width: 9px;
  height: 9px;
}

/* icon toolbar */
.toolbar {
  display: flex;
  flex: none;
  align-items: center;
  height: 18px;
  margin-left: 4px;
  padding-right: 61px;
  background: linear-gradient(#f1f3f7, #dde2ea);
}
.toolbar button {
  flex: 1 1 0;
  min-width: 0;
}
.toolbar svg {
  width: 13px;
  height: 13px;
  margin: 0 auto;
}
.sep {
  width: 4px;
  height: 14px;
  border-left: 1px solid #b9bec8;
}
.sep.thin {
  width: 1px;
  border: 0;
}

.fly::after {
  content: "";
  position: absolute;
  right: 0;
  bottom: 0;
  border: 2px solid transparent;
  border-right-color: #777;
  border-bottom-color: #777;
}

/* work area */
main {
  display: flex;
  flex: 1;
  min-height: 0;
  padding-top: 3px;
}

.palette {
  display: grid;
  grid-template-columns: 16px 16px;
  grid-auto-rows: 1fr;
  flex: none;
  width: 39px;
  margin-top: 3px;
  padding: 1px 7px 11px 0;
  border-top: 1px solid #c3c7d0;
}
.palette button {
  display: flex;
  align-items: center;
  justify-content: center;
  min-height: 0;
}
.palette svg {
  width: 12px;
  height: 12px;
}
.palette .more {
  padding-left: 6px;
  font-size: 10px;
  font-weight: bold;
}

.viewport {
  position: relative;
  flex: 1;
  min-width: 0;
  overflow: hidden;
  border-left: 1px solid #a9adb5;
  border-top: 1px solid #b9bcc2;
  background: linear-gradient(#f5f6f6, #9ab6ec);
}
.scene {
  width: 100%;
  height: 100%;
}
.scene .line {
  fill: none;
  stroke: #101c40;
  stroke-width: .7;
}
.scene .bold {
  fill: none;
  stroke: #05070f;
  stroke-width: 1.5;
}
.scene .edge {
  fill: none;
  stroke: #c804c4;
  stroke-width: 1.5;
}
.axis {
  font: bold 9px "Open Sans", sans-serif;
}
.view-title {
  position: absolute;
  top: 0;
  left: 1px;
  display: flex;
  background: #0f8edb;
  color: #08233c;
  font-size: 8px;
  font-weight: bold;
  line-height: 11px;
}
.view-title button:first-child {
  padding: 0 3px 0 4px;
}
.view-title button + button {
  width: 7px;
  border-left: 1px solid #0a5f98;
}

/* layer panel */
.panel {
  display: flex;
  flex-direction: column;
  flex: none;
  width: 129px;
  margin: 5px 0 1px 4px;
  border: 1px solid #b8bcc5;
  background: #fff;
  font-size: 8px;
}
.panel-tools {
  display: flex;
  align-items: center;
  justify-content: space-between;
  height: 21px;
  padding: 0 0 0 4px;
  border-bottom: 1px solid #d5d7dc;
}
.panel-tools svg {
  width: 9px;
  height: 9px;
}
.layers {
  width: 100%;
  border-collapse: collapse;
  table-layout: fixed;
}
.layers tr {
  height: 12px;
}
.layers thead tr {
  height: 14px;
}
.layers th,
.layers td {
  width: 9px;
  padding: 0;
  font-weight: normal;
  line-height: 11px;
  text-align: left;
  white-space: nowrap;
}
.layers td {
  border-bottom: 1px solid #f0f0f0;
}
.layers th {
  border-right: 1px solid #e4e4e4;
}
.layers th:first-child {
  width: 72px;
  padding-left: 2px;
}
.layers th:last-child {
  width: 17px;
  border: 0;
}
.layers td:first-child {
  padding-left: 4px;
}
.layers .current td:first-child {
  font-weight: bold;
}
.layers svg {
  width: 8px;
  height: 8px;
}
.lit {
  fill: #fbe48a;
}
.off {
  fill: #5e93dd;
}
.swatch {
  display: block;
  width: 8px;
  height: 7px;
  border: 1px solid #444;
}
.black {
  background: #000;
}
.red {
  background: #f00;
}
.blue {
  background: #0a90ff;
}
.green {
  background: #10d510;
}
.pink {
  background: #f0088c;
}
.mat {
  display: block;
  width: 7px;
  height: 7px;
  margin-left: 4px;
  background: #f8f8f8;
}
.scrollbar {
  height: 9px;
  margin-top: auto;
  padding: 4px 9px;
  background: #f0f0f0;
}
.scrollbar i {
  display: block;
  width: 40%;
  height: 1px;
  background: #777;
}

/* vertical tabs */
.side-tabs {
  display: flex;
  flex-direction: column;
  flex: none;
  width: 18px;
  padding: 4px 1px 8px 0;
}
.side-tabs button {
  display: flex;
  flex-direction: column;
  align-items: center;
  flex: 1 1 0;
  min-height: 0;
  gap: 3px;
  padding-top: 4px;
  z-index: 0;
}
.side-tabs button::before,
.side-tabs button::after {
  content: "";
  position: absolute;
  inset: 0 0 -6px;
  z-index: -2;
  background: #c3c7cf;
  clip-path: polygon(0 12px, 9px 0, 100% 0, 100% 25px, 0 100%);
}
.side-tabs button::after {
  inset: 1px 1px -5px;
  z-index: -1;
  background: #fafbfc;
}
.side-tabs .active::before,
.side-tabs .active::after {
  left: -1px;
  clip-path: polygon(0 0, 100% 0, 100% 25px, 0 100%);
}
.side-tabs svg {
  flex: none;
  width: 8px;
  height: 8px;
}
.side-tabs span {
  writing-mode: vertical-rl;
  line-height: 8px;
}

/* bottom bars */
.osnap {
  display: flex;
  flex: none;
  align-items: center;
  gap: 5px;
  height: 20px;
  padding: 3px 5px 0;
}
.osnap label {
  display: flex;
  align-items: center;
  gap: 2px;
  white-space: nowrap;
}
.osnap input {
  appearance: none;
  width: 7px;
  height: 7px;
  margin: 0;
  border: 1px solid #777;
  border-radius: 1px;
  background: #fff;
}
.osnap input:checked {
  border-color: #0d67b5;
  background: #0d67b5;
}
.osnap input:checked::before {
  content: "";
  display: block;
  width: 4px;
  height: 2px;
  margin-top: 1px;
  border: solid #fff;
  border-width: 0 0 1px 1px;
  transform: rotate(-45deg);
}
.osnap .soft input {
  border-color: #eee;
}
.osnap .last {
  margin-left: 7px;
}

.status {
  display: flex;
  flex: none;
  height: 11px;
  border-top: 1px solid #b9bdc7;
}
.status > * {
  padding: 0 3px;
  border-right: 1px solid #b9bdc7;
  text-align: center;
  white-space: nowrap;
}
.status output,
.status .unit {
  width: 50px;
}
.status output {
  padding: 0;
}
.status output,
.cpu {
  font-size: 8px;
}
.status .layer {
  display: flex;
  align-items: center;
  width: 137px;
  padding: 0 1px;
}
.layer i {
  width: 9px;
  height: 8px;
  background: #000;
}
.status .on {
  background: #e9f2f9;
  font-weight: bold;
}
.status .cpu {
  padding: 0 1px;
  border: 0;
}
```
